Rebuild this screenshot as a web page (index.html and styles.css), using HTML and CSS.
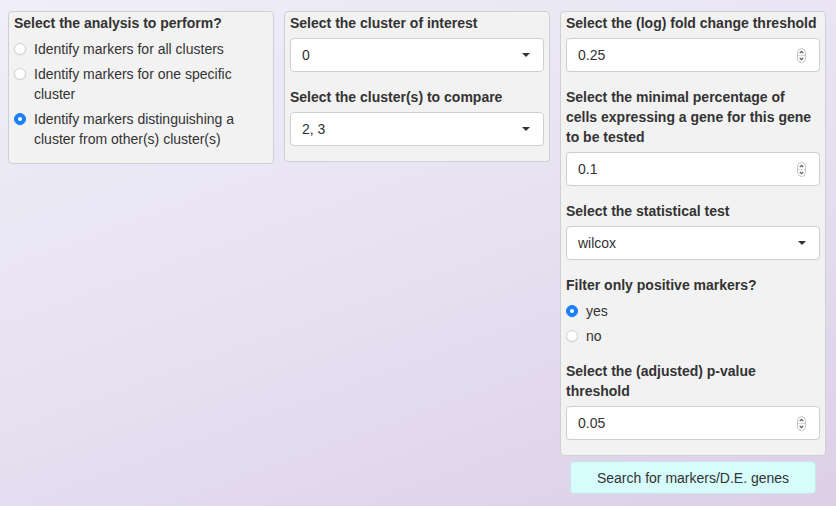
FILE: index.html
```html
<!DOCTYPE html>
<html>
<head>
<meta charset="utf-8">
<link rel="stylesheet" href="styles.css">
</head>
<body>
<div class="row">
  <div class="col">
    <div class="well">
      <div class="field tight">
        <div class="label">Select the analysis to perform?</div>
        <div class="radios">
          <div class="radio"><span class="dot"></span><span class="rtext">Identify markers for all clusters</span></div>
          <div class="radio"><span class="dot"></span><span class="rtext">Identify markers for one specific cluster</span></div>
          <div class="radio"><span class="dot on"></span><span class="rtext">Identify markers distinguishing a cluster from other(s) cluster(s)</span></div>
        </div>
      </div>
    </div>
  </div>
  <div class="col">
    <div class="well">
      <div class="field">
        <div class="label">Select the cluster of interest</div>
        <div class="select"><span>0</span><span class="caret"></span></div>
      </div>
      <div class="field">
        <div class="label">Select the cluster(s) to compare</div>
        <div class="select"><span>2, 3</span><span class="caret"></span></div>
      </div>
    </div>
  </div>
  <div class="col">
    <div class="well">
      <div class="field">
        <div class="label">Select the (log) fold change threshold</div>
        <div class="select"><span>0.25</span><svg class="spin" width="9" height="15" viewBox="0 0 9 15"><rect x="0.5" y="0.5" width="8" height="14" rx="4" fill="#fff" stroke="#c4c4c4"/><line x1="1" y1="7.5" x2="8" y2="7.5" stroke="#d6d6d6"/><path d="M2.7 5.2 L4.5 3.4 L6.3 5.2" fill="none" stroke="#555" stroke-width="1.1"/><path d="M2.7 9.8 L4.5 11.6 L6.3 9.8" fill="none" stroke="#555" stroke-width="1.1"/></svg></div>
      </div>
      <div class="field">
        <div class="label narrow">Select the minimal percentage of cells expressing a gene for this gene to be tested</div>
        <div class="select"><span>0.1</span><svg class="spin" width="9" height="15" viewBox="0 0 9 15"><rect x="0.5" y="0.5" width="8" height="14" rx="4" fill="#fff" stroke="#c4c4c4"/><line x1="1" y1="7.5" x2="8" y2="7.5" stroke="#d6d6d6"/><path d="M2.7 5.2 L4.5 3.4 L6.3 5.2" fill="none" stroke="#555" stroke-width="1.1"/><path d="M2.7 9.8 L4.5 11.6 L6.3 9.8" fill="none" stroke="#555" stroke-width="1.1"/></svg></div>
      </div>
      <div class="field">
        <div class="label">Select the statistical test</div>
        <div class="select"><span>wilcox</span><span class="caret"></span></div>
      </div>
      <div class="field">
        <div class="label">Filter only positive markers?</div>
        <div class="radios">
          <div class="radio"><span class="dot on"></span><span class="rtext">yes</span></div>
          <div class="radio"><span class="dot"></span><span class="rtext">no</span></div>
        </div>
      </div>
      <div class="field">
        <div class="label">Select the (adjusted) p-value threshold</div>
        <div class="select"><span>0.05</span><svg class="spin" width="9" height="15" viewBox="0 0 9 15"><rect x="0.5" y="0.5" width="8" height="14" rx="4" fill="#fff" stroke="#c4c4c4"/><line x1="1" y1="7.5" x2="8" y2="7.5" stroke="#d6d6d6"/><path d="M2.7 5.2 L4.5 3.4 L6.3 5.2" fill="none" stroke="#555" stroke-width="1.1"/><path d="M2.7 9.8 L4.5 11.6 L6.3 9.8" fill="none" stroke="#555" stroke-width="1.1"/></svg></div>
      </div>
    </div>
    <div class="btnwrap"><div class="btn">Search for markers/D.E. genes</div></div>
  </div>
</div>
</body>
</html>
```
FILE: styles.css
```css
html, body {
  margin: 0;
  padding: 0;
}
body {
  width: 836px;
  height: 506px;
  overflow: hidden;
  background: linear-gradient(160deg, #efeef9 0%, #e8e3f3 45%, #dccfe6 100%);
  font-family: "Liberation Sans", Arial, Helvetica, sans-serif;
  font-size: 14px;
  line-height: 20px;
  color: #333;
}
.row {
  display: grid;
  grid-template-columns: 266px 266px 266px;
  column-gap: 10px;
  padding: 11px 9px 0 8px;
  align-items: start;
}
.well {
  background: #f2f2f2;
  border: 1px solid #d0d0d0;
  border-radius: 4px;
  padding: 1px 5px 0 5px;
}
.field {
  margin-bottom: 15px;
}
.field.tight {
  margin-bottom: 14px;
}
.label {
  font-weight: bold;
  margin-bottom: 5px;
}
.label.narrow {
  padding-right: 6px;
}
.radios {
  padding-top: 1px;
}
.radio {
  display: flex;
  align-items: flex-start;
  margin-bottom: 5px;
}
.radio:last-child {
  margin-bottom: 0;
}
.dot {
  flex: none;
  width: 10px;
  height: 10px;
  margin: 4px 8px 0 0;
  border-radius: 50%;
  background: #fff;
  border: 1px solid #d2d2d2;
  box-shadow: 0 0.5px 1px rgba(0,0,0,0.08);
  box-sizing: content-box;
  position: relative;
}
.dot.on {
  background: #1b7ff5;
  border-color: #1b7ff5;
}
.dot.on::after {
  content: "";
  position: absolute;
  left: 3px;
  top: 3px;
  width: 4px;
  height: 4px;
  border-radius: 50%;
  background: #fff;
}
.select {
  height: 34px;
  box-sizing: border-box;
  background: #fff;
  border: 1px solid #cfcfcf;
  border-radius: 4px;
  display: flex;
  align-items: center;
  justify-content: space-between;
  padding: 0 14px 0 11px;
}
.caret {
  width: 0;
  height: 0;
  border-left: 4px solid transparent;
  border-right: 4px solid transparent;
  border-top: 4px solid #333;
  margin-right: -1px;
}
.spin {
  display: block;
  margin-right: -1px;
}
.btnwrap {
  padding: 5px 10px 0 10px;
}
.btn {
  height: 33px;
  box-sizing: border-box;
  background: #d6fcfc;
  border: 1px solid #c6e6e8;
  border-radius: 4px;
  display: flex;
  align-items: center;
  justify-content: center;
  color: #333;
}
```
